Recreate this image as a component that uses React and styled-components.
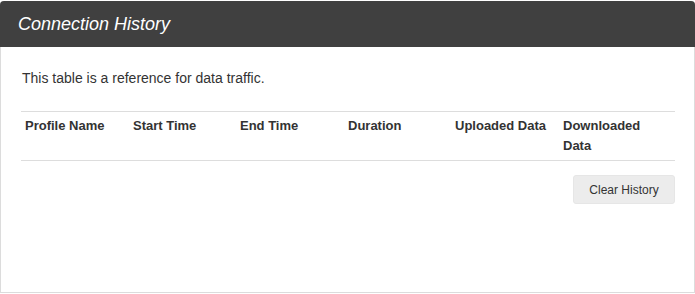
import styled, { createGlobalStyle } from 'styled-components';

const GlobalStyle = createGlobalStyle`
  html, body {
    margin: 0;
    padding: 0;
    background: #fff;
    font-family: "Liberation Sans", Arial, sans-serif;
    color: #333;
  }
`;

const Page = styled.div`
  padding-top: 1px;
  height: 293px;
  box-sizing: border-box;
`;

const Panel = styled.div`
  width: 695px;
  height: 292px;
  box-sizing: border-box;
  border: 1px solid #dcdcdc;
  border-top: none;
  border-radius: 4px 4px 0 0;
  box-shadow: 0 1px 1px rgba(0, 0, 0, 0.06);
  display: flex;
  flex-direction: column;
`;

const Header = styled.div`
  height: 46px;
  margin: 0 -1px;
  background: #404040;
  border-radius: 4px 4px 0 0;
  padding: 0 18px;
  display: flex;
  align-items: center;
`;

const Title = styled.h3`
  margin: 0;
  font-size: 18px;
  font-weight: normal;
  font-style: italic;
  color: #fff;
`;

const Body = styled.div`
  padding: 21px 19px 0 20px;
`;

const Intro = styled.p`
  margin: 0 0 23px 1px;
  font-size: 14px;
  line-height: 20px;
`;

const Table = styled.div`
  display: grid;
  grid-template-columns: 108px 107px 108px 107px 108px 1fr;
  border-top: 1px solid #ddd;
  border-bottom: 1px solid #ddd;
`;

const HeadCell = styled.div`
  padding: 4px 6px 4px 4px;
  font-size: 13px;
  font-weight: bold;
  line-height: 20px;
  color: #333;
`;

const Actions = styled.div`
  display: flex;
  justify-content: flex-end;
  margin-top: 14px;
`;

const Button = styled.button`
  height: 29px;
  width: 102px;
  padding: 0;
  border: 1px solid #e6e6e6;
  border-radius: 3px;
  background: #ececec;
  font-family: "Liberation Sans", Arial, sans-serif;
  font-size: 12px;
  color: #333;
  cursor: pointer;
`;

const columns = ['Profile Name', 'Start Time', 'End Time', 'Duration', 'Uploaded Data', 'Downloaded Data'];

function App() {
  return (
    <Page>
      <GlobalStyle />
      <Panel>
        <Header>
          <Title>Connection History</Title>
        </Header>
        <Body>
          <Intro>This table is a reference for data traffic.</Intro>
          <Table>
            {columns.map(c => (
              <HeadCell key={c}>{c}</HeadCell>
            ))}
          </Table>
          <Actions>
            <Button>Clear History</Button>
          </Actions>
        </Body>
      </Panel>
    </Page>
  );
}

export default App;
